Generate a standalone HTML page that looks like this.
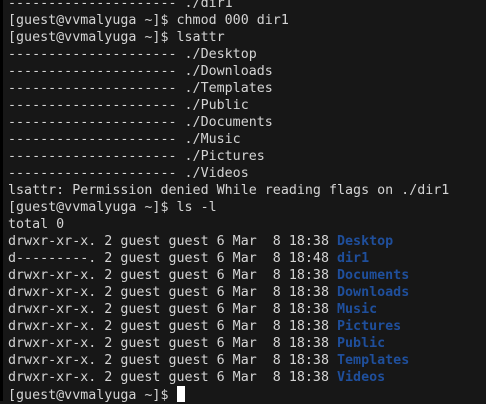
<!DOCTYPE html>
<html><head><style>
html,body{margin:0;padding:0;}
body{width:486px;height:401px;background:#171717;overflow:hidden;position:relative;}
.strip{position:absolute;left:0;top:0;width:3px;height:401px;background:#000;}
pre{position:absolute;left:8px;top:-5px;margin:0;font-family:"DejaVu Sans Mono","Liberation Mono",monospace;font-size:13.33px;line-height:17px;color:#d4d4d4;}
b{color:#1f4f9c;font-weight:bold;}
.cur{display:inline-block;width:8px;height:16px;background:#fff;vertical-align:-3px;}
</style></head><body><div class="strip"></div><pre>--------------------- ./dir1
[guest@vvmalyuga ~]$ chmod 000 dir1
[guest@vvmalyuga ~]$ lsattr
--------------------- ./Desktop
--------------------- ./Downloads
--------------------- ./Templates
--------------------- ./Public
--------------------- ./Documents
--------------------- ./Music
--------------------- ./Pictures
--------------------- ./Videos
lsattr: Permission denied While reading flags on ./dir1
[guest@vvmalyuga ~]$ ls -l
total 0
drwxr-xr-x. 2 guest guest 6 Mar  8 18:38 <b>Desktop</b>
d---------. 2 guest guest 6 Mar  8 18:48 <b>dir1</b>
drwxr-xr-x. 2 guest guest 6 Mar  8 18:38 <b>Documents</b>
drwxr-xr-x. 2 guest guest 6 Mar  8 18:38 <b>Downloads</b>
drwxr-xr-x. 2 guest guest 6 Mar  8 18:38 <b>Music</b>
drwxr-xr-x. 2 guest guest 6 Mar  8 18:38 <b>Pictures</b>
drwxr-xr-x. 2 guest guest 6 Mar  8 18:38 <b>Public</b>
drwxr-xr-x. 2 guest guest 6 Mar  8 18:38 <b>Templates</b>
drwxr-xr-x. 2 guest guest 6 Mar  8 18:38 <b>Videos</b>
[guest@vvmalyuga ~]$ <span class="cur"></span></pre></body></html>
